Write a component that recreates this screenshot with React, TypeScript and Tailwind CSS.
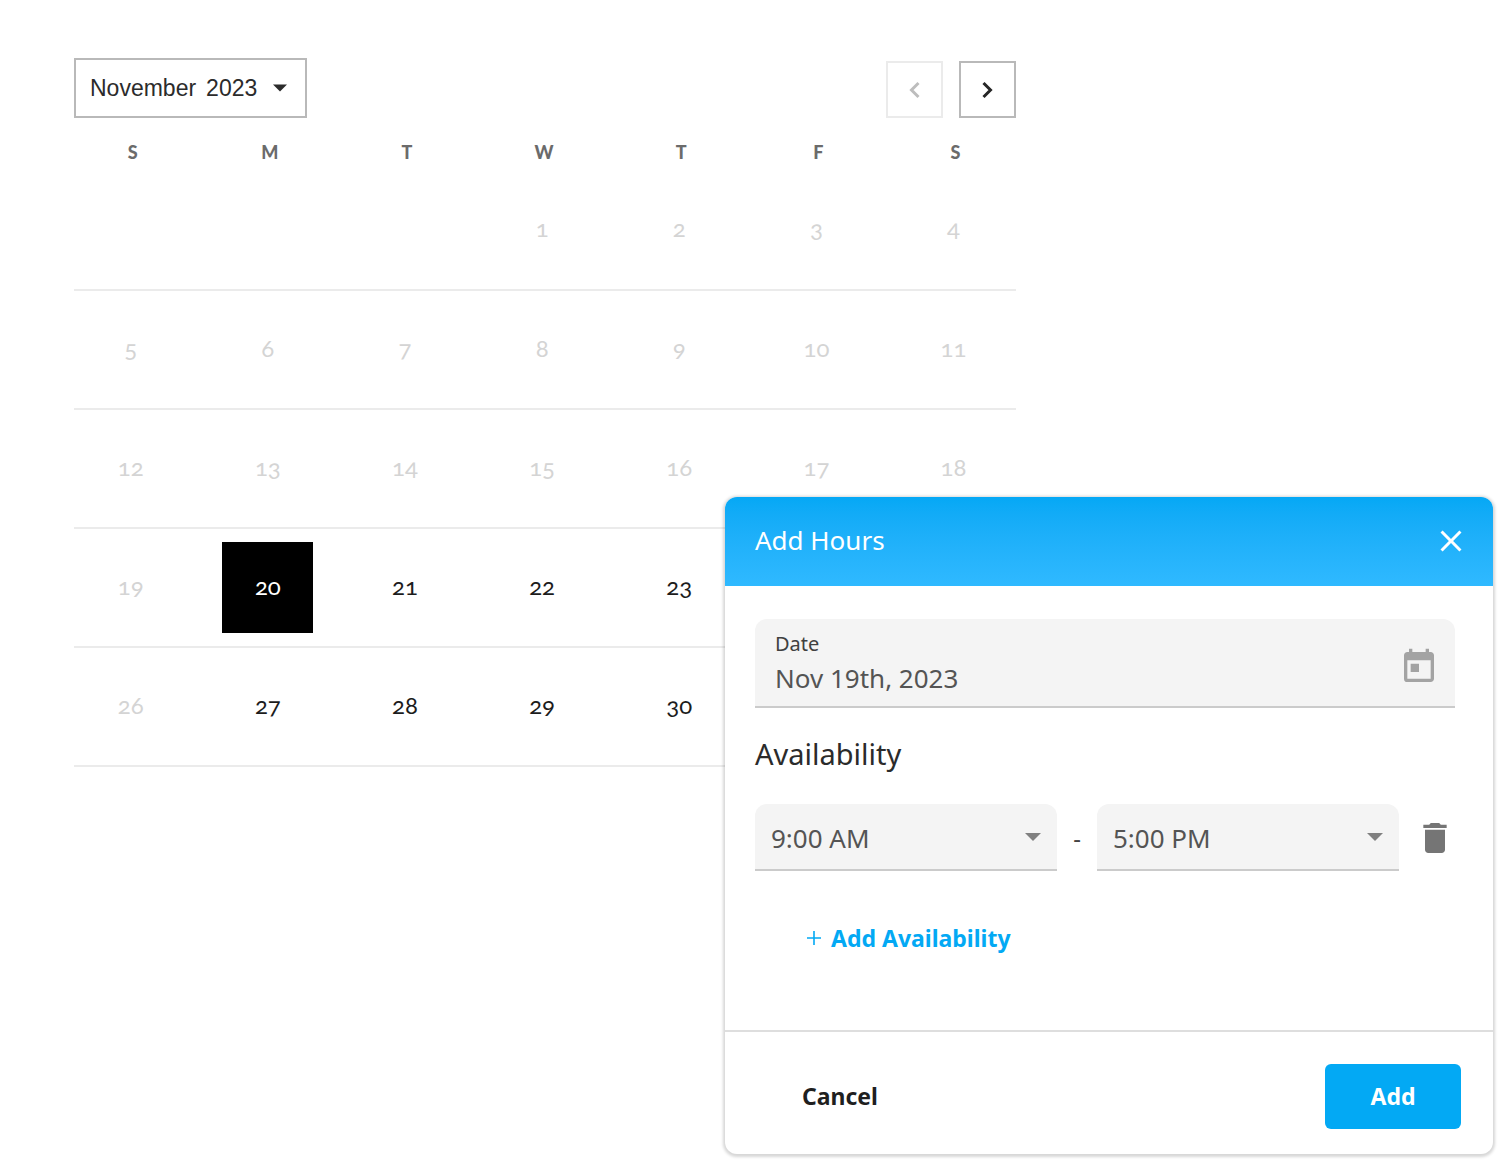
import { useState } from "react";
import { MdClose, MdDelete, MdToday } from "react-icons/md";

const weekdays = ["S", "M", "T", "W", "T", "F", "S"];
const weeks: (number | null)[][] = [
  [null, null, null, 1, 2, 3, 4],
  [5, 6, 7, 8, 9, 10, 11],
  [12, 13, 14, 15, 16, 17, 18],
  [19, 20, 21, 22, 23, 24, 25],
  [26, 27, 28, 29, 30, null, null],
];
const hours = ["8:00 AM", "9:00 AM", "10:00 AM", "4:00 PM", "5:00 PM", "6:00 PM"];

function dayIsOpen(day: number, column: number) {
  return day >= 20 && column !== 0;
}

function Caret({ className }: { className: string }) {
  return (
    <svg viewBox="0 0 16 8" className={className} fill="currentColor" aria-hidden="true">
      <path d="M0 0h16L8 8z" />
    </svg>
  );
}

function Chevron({ flip = false }: { flip?: boolean }) {
  return (
    <svg
      viewBox="0 0 11 18"
      className="h-[18px] w-[11px]"
      fill="none"
      stroke="currentColor"
      strokeWidth="3"
      aria-hidden="true"
    >
      <path d={flip ? "M9.5 2L2.5 9l7 7" : "M1.5 2l7 7-7 7"} />
    </svg>
  );
}

function Calendar() {
  const [selected, setSelected] = useState(20);
  return (
    <section className="w-full max-w-[942px]" aria-label="Calendar">
      <div className="flex items-end justify-between">
        <button
          type="button"
          className="flex h-[60px] items-center border-2 border-[#b9b9b9] pr-[18px] pl-3.5 font-['Liberation_Sans',sans-serif] text-[23px] text-[#2b2b2b]"
        >
          <span>November</span>
          <span className="ml-2.5">2023</span>
          <Caret className="ml-4 h-2 w-3.5" />
        </button>
        <div className="flex gap-4">
          <button
            type="button"
            disabled
            aria-label="Previous month"
            className="flex size-[57px] items-center justify-center border-2 border-[#ebebeb] text-[#bdbdbd]"
          >
            <Chevron flip />
          </button>
          <button
            type="button"
            aria-label="Next month"
            className="flex size-[57px] items-center justify-center border-2 border-[#b9b9b9] text-[#262626]"
          >
            <Chevron />
          </button>
        </div>
      </div>

      <table className="w-full table-fixed border-collapse text-center font-[Lato,sans-serif]">
        <colgroup>
          <col className="w-[13.3%]" />
          <col className="w-[14.56%]" />
          <col className="w-[14.56%]" />
          <col className="w-[14.56%]" />
          <col className="w-[14.56%]" />
          <col className="w-[14.56%]" />
          <col />
        </colgroup>
        <thead>
          <tr className="h-[53px]">
            {weekdays.map((name, i) => (
              <th
                key={i}
                scope="col"
                className="pt-5 pl-1 align-top text-lg leading-7 font-black text-[#6b6b6b] first:pr-3 last:pl-2.5"
              >
                {name}
              </th>
            ))}
          </tr>
        </thead>
        <tbody>
          {weeks.map((week, w) => (
            <tr key={w} className="h-[119px] border-b-2 border-[#ebebeb]">
              {week.map((day, column) => (
                <td key={column} className="p-0 first:pr-3 last:pl-1.5">
                  {day !== null && (
                    <button
                      type="button"
                      disabled={!dayIsOpen(day, column)}
                      aria-pressed={day === selected}
                      onClick={() => setSelected(day)}
                      className="size-[91px] pb-1 text-2xl text-[#1c1c1c] oldstyle-nums disabled:text-[#d4d4d4] aria-pressed:bg-black aria-pressed:text-white"
                    >
                      {day}
                    </button>
                  )}
                </td>
              ))}
            </tr>
          ))}
        </tbody>
      </table>
    </section>
  );
}

function TimeSelect({ label, initial }: { label: string; initial: string }) {
  return (
    <div className="relative flex-1">
      <select
        aria-label={label}
        defaultValue={initial}
        className="h-[67px] w-full appearance-none rounded-t-xl border-b-2 border-[#cbcbcb] bg-[#f4f4f4] px-4 pt-1 text-[26px] text-[#545454]"
      >
        {hours.map((hour) => (
          <option key={hour}>{hour}</option>
        ))}
      </select>
      <Caret className="pointer-events-none absolute top-[29px] right-4 h-2 w-4 text-[#808080]" />
    </div>
  );
}

function AddHoursDialog() {
  return (
    <div
      role="dialog"
      aria-labelledby="dialog-title"
      className="absolute top-[497px] right-[7px] w-[768px] max-w-full overflow-hidden rounded-xl bg-white font-['Noto_Sans',sans-serif] shadow-[0_1px_3px_2px_rgba(0,0,0,0.16)]"
    >
      <header className="flex h-[89px] items-center justify-between bg-linear-to-b from-[#05a8f5] to-[#2fb9ff] pr-6 pb-0.5 pl-[30px] text-white">
        <h2 id="dialog-title" className="text-[26px]">
          Add Hours
        </h2>
        <button type="button" aria-label="Close">
          <MdClose className="size-9" />
        </button>
      </header>

      <div className="px-[30px] pt-[33px] pb-[75px]">
        <div className="mr-2 flex h-[89px] items-center justify-between rounded-t-xl border-b-2 border-[#cbcbcb] bg-[#f4f4f4] pr-4 pl-5">
          <div className="flex min-w-0 flex-1 flex-col pt-0.5">
            <label htmlFor="date" className="text-xl leading-7 text-[#404040]">
              Date
            </label>
            <input
              id="date"
              defaultValue="Nov 19th, 2023"
              className="w-full bg-transparent text-[26px] leading-10 text-[#545454] outline-none"
            />
          </div>
          <button type="button" aria-label="Choose a date" className="pt-2 text-[#a3a3a3]">
            <MdToday className="size-10" />
          </button>
        </div>

        <h3 className="mt-6 text-[29px] leading-[44px] text-[#2b2b2b]">Availability</h3>

        <div className="mt-7 mr-2 flex items-center">
          <TimeSelect label="Start time" initial="9:00 AM" />
          <span className="w-10 text-center text-2xl text-[#444]">-</span>
          <TimeSelect label="End time" initial="5:00 PM" />
          <button type="button" aria-label="Remove hours" className="ml-4 text-[#757575]">
            <MdDelete className="size-10" />
          </button>
        </div>

        <button
          type="button"
          className="mt-[50px] ml-[52px] flex items-center text-[#03a9f4]"
        >
          <svg viewBox="0 0 14 14" className="mr-2.5 size-3.5" stroke="currentColor" strokeWidth="1.6" aria-hidden="true">
            <path d="M7 0v14M0 7h14" />
          </svg>
          <span className="text-[23px] leading-[34px] font-bold">Add Availability</span>
        </button>
      </div>

      <footer className="flex items-center justify-between border-t-2 border-[#dedede] pt-8 pr-8 pb-[25px] pl-[77px] text-[23px] font-bold">
        <button type="button" className="text-[#1f1f1f]">
          Cancel
        </button>
        <button type="button" className="h-[65px] w-[136px] rounded-md bg-[#03a9f4] text-white">
          Add
        </button>
      </footer>
    </div>
  );
}

export default function App() {
  return (
    <main className="relative min-h-screen bg-white pt-[58px] pl-[74px]">
      <Calendar />
      <AddHoursDialog />
    </main>
  );
}
